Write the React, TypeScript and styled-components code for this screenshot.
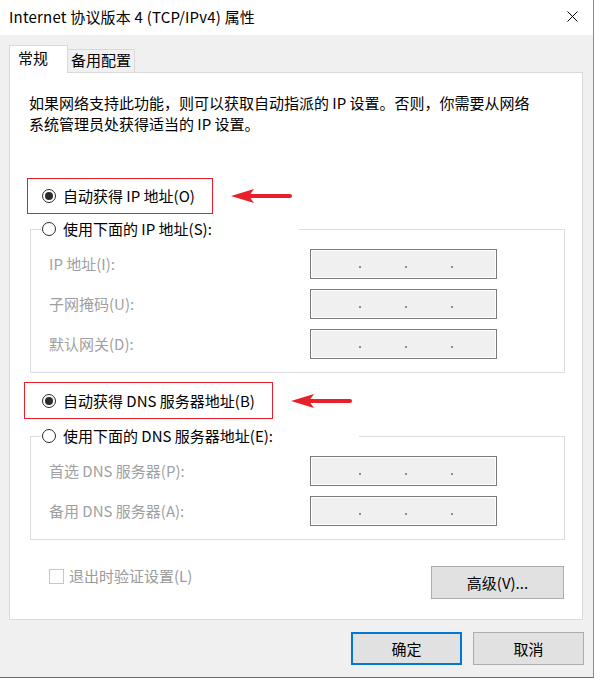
import React from "react";
import styled, { createGlobalStyle } from "styled-components";

const GlobalStyle = createGlobalStyle`
  html, body { margin: 0; padding: 0; background: #ffffff; }
  body {
    font-family: "Noto Sans CJK SC", "Noto Sans", sans-serif;
    font-size: 15px;
    color: #000;
  }
  * { box-sizing: border-box; }
`;

const Window = styled.div`
  width: 594px;
  height: 678px;
  display: flex;
  flex-direction: column;
  background: #f0f0f0;
  border-right: 1px solid #8a8a8a;
  border-bottom: 1px solid #6b6b6b;
`;

const TitleBar = styled.div`
  height: 35px;
  flex: none;
  background: #ffffff;
  display: flex;
  align-items: center;
  justify-content: space-between;
  padding: 0 15px 0 9px;
`;

const TitleText = styled.div`
  font-size: 15px;
  line-height: 20px;
  letter-spacing: 0.2px;
  white-space: nowrap;
  margin-top: -1px;
`;

const CloseButton = styled.div`
  width: 12px;
  height: 12px;
  display: flex;
  align-items: center;
  justify-content: center;
  margin-top: -2px;
`;

const Body = styled.div`
  flex: 1;
  display: flex;
  flex-direction: column;
  padding: 10px 9px 0 9px;
`;

const TabsRow = styled.div`
  display: flex;
  align-items: flex-end;
  height: 27px;
`;

const Tab = styled.div<{ $active?: boolean }>`
  position: relative;
  z-index: ${(p) => (p.$active ? 1 : 0)};
  background: ${(p) => (p.$active ? "#ffffff" : "#f0f0f0")};
  border: 1px solid #d9d9d9;
  border-bottom: none;
  height: ${(p) => (p.$active ? "28px" : "23px")};
  width: ${(p) => (p.$active ? "59px" : "68px")};
  margin-bottom: ${(p) => (p.$active ? "-1px" : "0")};
  margin-left: ${(p) => (p.$active ? "0" : "-1px")};
  padding: ${(p) => (p.$active ? "2px 0 0 8px" : "0 0 0 3px")};
  font-size: 15px;
  line-height: 20px;
  white-space: nowrap;
`;

const Panel = styled.div`
  background: #ffffff;
  border: 1px solid #d9d9d9;
  margin-right: 1px;
  display: flex;
  flex-direction: column;
  padding-bottom: 20px;
`;

const Description = styled.p`
  margin: 19px 0 0 19px;
  font-size: 15px;
  line-height: 21px;
  white-space: nowrap;
`;

const AnnotatedRow = styled.div<{ $top: number; $left: number; $gap: number }>`
  display: flex;
  align-items: center;
  margin-top: ${(p) => p.$top}px;
  margin-left: ${(p) => p.$left}px;
  gap: ${(p) => p.$gap}px;
`;

const RedBox = styled.div<{ $height: number; $padLeft: number }>`
  display: flex;
  align-items: center;
  height: ${(p) => p.$height}px;
  border: 1px solid #e5202a;
  padding: 0 17px 0 ${(p) => p.$padLeft}px;
`;

const RadioLabel = styled.label`
  display: flex;
  align-items: center;
  gap: 7px;
  font-size: 15px;
  line-height: 22px;
  white-space: nowrap;
  color: #000;
`;

const RadioCircle = styled.span<{ $checked?: boolean }>`
  position: relative;
  width: 14px;
  height: 14px;
  flex: none;
  border-radius: 50%;
  border: 1px solid #2b2b2b;
  background: #ffffff;
  &::after {
    content: "";
    display: ${(p) => (p.$checked ? "block" : "none")};
    position: absolute;
    left: 2px;
    top: 2px;
    width: 8px;
    height: 8px;
    border-radius: 50%;
    background: #2b2b2b;
  }
`;

const Group = styled.fieldset<{ $top: number }>`
  margin: ${(p) => p.$top}px 0 0 20px;
  width: 535px;
  border: 1px solid #dcdcdc;
  padding: 9px 0 13px 18px;
  min-width: 0;
`;

const Legend = styled.legend<{ $width: number }>`
  width: ${(p) => p.$width}px;
  height: 22px;
  margin-left: -8px;
  padding: 0 0 0 1px;
  display: flex;
  align-items: center;
`;

const FieldRow = styled.div`
  display: flex;
  align-items: center;
  height: 30px;
  & + & {
    margin-top: 10px;
  }
`;

const FieldLabel = styled.span`
  width: 261px;
  flex: none;
  color: #a0a0a0;
  font-size: 15px;
  line-height: 20px;
  white-space: nowrap;
`;

const AddressField = styled.div`
  width: 187px;
  height: 30px;
  border: 1px solid #7a7a7a;
  box-shadow: inset 0 0 0 1px #ffffff;
  background: #f0f0f0;
  display: flex;
  align-items: flex-start;
  padding: 16px 0 0 48px;
  gap: 44px;
`;

const Dot = styled.span`
  width: 2px;
  height: 2px;
  background: #7d8fab;
`;

const BottomRow = styled.div`
  display: flex;
  justify-content: space-between;
  align-items: flex-start;
  margin-top: 26px;
  padding: 0 18px 0 39px;
`;

const CheckLabel = styled.label`
  display: flex;
  align-items: center;
  gap: 5px;
  margin-top: 2px;
  color: #9a9a9a;
  font-size: 15px;
  line-height: 16px;
  white-space: nowrap;
`;

const CheckBox = styled.span`
  width: 15px;
  height: 15px;
  border: 1px solid #c6c6c6;
  background: #ffffff;
  flex: none;
`;

const Button = styled.button<{ $width: number; $default?: boolean }>`
  width: ${(p) => p.$width}px;
  height: 33px;
  background: #e1e1e1;
  border: ${(p) => (p.$default ? "2px solid #0078d7" : "1px solid #adadad")};
  border-radius: 0;
  font-family: "Noto Sans CJK SC", "Noto Sans", sans-serif;
  font-size: 15px;
  line-height: 20px;
  color: #000;
  padding: 0;
  display: flex;
  align-items: center;
  justify-content: center;
`;

const Footer = styled.div`
  display: flex;
  justify-content: flex-end;
  gap: 11px;
  margin-top: 12px;
`;

const Arrow = () => (
  <svg width="62" height="20" viewBox="0 0 62 20">
    <line x1="17" y1="10" x2="59" y2="10" stroke="#e8202a" strokeWidth="4" strokeLinecap="round" />
    <polygon points="0,10 23,3 18,10 23,17" fill="#e8202a" />
  </svg>
);

const CloseIcon = () => (
  <svg width="11" height="11" viewBox="0 0 11 11">
    <path d="M0.5 0.5 L10.5 10.5 M10.5 0.5 L0.5 10.5" stroke="#000" strokeWidth="1" />
  </svg>
);

const Address = () => (
  <AddressField>
    <Dot />
    <Dot />
    <Dot />
  </AddressField>
);

export default function App() {
  return (
    <>
      <GlobalStyle />
      <Window>
        <TitleBar>
          <TitleText>Internet 协议版本 4 (TCP/IPv4) 属性</TitleText>
          <CloseButton>
            <CloseIcon />
          </CloseButton>
        </TitleBar>
        <Body>
          <TabsRow>
            <Tab $active>常规</Tab>
            <Tab>备用配置</Tab>
          </TabsRow>
          <Panel>
            <Description>
              如果网络支持此功能，则可以获取自动指派的 IP 设置。否则，你需要从网络
              <br />
              系统管理员处获得适当的 IP 设置。
            </Description>

            <AnnotatedRow $top={44} $left={17} $gap={18}>
              <RedBox $height={36} $padLeft={14}>
                <RadioLabel>
                  <RadioCircle $checked />
                  自动获得 IP 地址(O)
                </RadioLabel>
              </RedBox>
              <Arrow />
            </AnnotatedRow>

            <Group $top={4}>
              <Legend $width={258}>
                <RadioLabel>
                  <RadioCircle />
                  使用下面的 IP 地址(S):
                </RadioLabel>
              </Legend>
              <FieldRow>
                <FieldLabel>IP 地址(I):</FieldLabel>
                <Address />
              </FieldRow>
              <FieldRow>
                <FieldLabel>子网掩码(U):</FieldLabel>
                <Address />
              </FieldRow>
              <FieldRow>
                <FieldLabel>默认网关(D):</FieldLabel>
                <Address />
              </FieldRow>
            </Group>

            <AnnotatedRow $top={9} $left={14} $gap={18}>
              <RedBox $height={37} $padLeft={17}>
                <RadioLabel>
                  <RadioCircle $checked />
                  自动获得 DNS 服务器地址(B)
                </RadioLabel>
              </RedBox>
              <Arrow />
            </AnnotatedRow>

            <Group $top={6}>
              <Legend $width={318}>
                <RadioLabel>
                  <RadioCircle />
                  使用下面的 DNS 服务器地址(E):
                </RadioLabel>
              </Legend>
              <FieldRow>
                <FieldLabel>首选 DNS 服务器(P):</FieldLabel>
                <Address />
              </FieldRow>
              <FieldRow>
                <FieldLabel>备用 DNS 服务器(A):</FieldLabel>
                <Address />
              </FieldRow>
            </Group>

            <BottomRow>
              <CheckLabel>
                <CheckBox />
                退出时验证设置(L)
              </CheckLabel>
              <Button $width={133}>高级(V)...</Button>
            </BottomRow>
          </Panel>
          <Footer>
            <Button $width={111} $default>
              确定
            </Button>
            <Button $width={111}>取消</Button>
          </Footer>
        </Body>
      </Window>
    </>
  );
}
